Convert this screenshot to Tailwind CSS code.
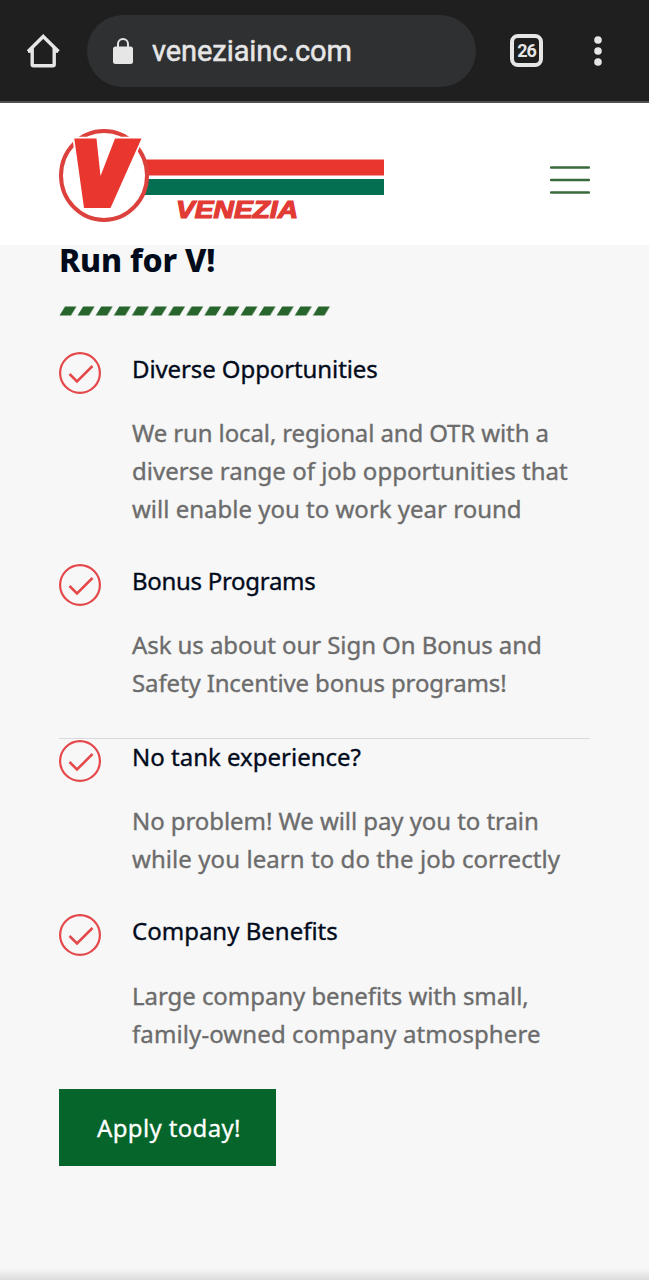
<!DOCTYPE html>
<html lang="en">
<head>
<meta charset="utf-8">
<meta name="viewport" content="width=device-width">
<title>Venezia</title>
<script src="https://cdn.jsdelivr.net/npm/@tailwindcss/browser@4"></script>
</head>
<body class="h-[1280px] w-[649px] overflow-hidden bg-[#f7f7f7] font-['Noto_Sans',sans-serif]">
<svg class="hidden"><symbol id="check" viewBox="0 0 42 42"><circle cx="21" cy="21" r="19.900" fill="none" stroke="#e5484a" stroke-width="2.200"/><path d="M10.500 22l7.500 7.500L33.500 14" fill="none" stroke="#e5484a" stroke-width="2.500"/></symbol></svg>
<div class="flex h-[1280px] flex-col">
  <div class="flex h-[103px] shrink-0 items-center border-b-2 border-[#505050] bg-[#1f1f1f] pl-[26px]">
    <svg class="h-[34px] w-[34px] shrink-0" viewBox="0 0 34 34" fill="none" stroke="#e6e6e6" stroke-width="3.400" stroke-linejoin="round"><path d="M2 17.500L17.200 2.500L32.500 17.500" stroke-linejoin="miter"/><path d="M6.200 14V30.500Q6.200 31.700 7.400 31.700H27Q28.200 31.700 28.200 30.500V14M2 17H6M28 17H32" /></svg>
    <div class="ml-[27px] flex h-[72px] w-[389px] items-center rounded-full bg-[#2f3032] pl-[26px]">
      <svg class="h-[26px] w-5" viewBox="0 0 20 26"><rect y="8.500" width="20" height="17.500" rx="2.500" fill="#e6e6e6"/><path d="M5 10V6a5 5 0 0 1 10 0V10" fill="none" stroke="#e6e6e6" stroke-width="2"/></svg>
      <span class="ml-[19px] whitespace-nowrap font-[Roboto] text-[29px] leading-9 tracking-[-0.07px] text-[#e6e6e6] [-webkit-text-stroke:0.5px_#e6e6e6]">veneziainc.com</span>
    </div>
    <div class="ml-[34px] flex size-[33px] items-center justify-center rounded-[8px] border-[4px] border-[#e6e6e6] font-[Roboto] text-[18px] font-bold leading-none tracking-[-1px] text-[#e6e6e6]">26</div>
    <svg class="ml-[51px] h-[30px] w-2" viewBox="0 0 8 30" fill="#e6e6e6"><circle cx="4" cy="4" r="3.800"/><circle cx="4" cy="15" r="3.800"/><circle cx="4" cy="26" r="3.800"/></svg>
  </div>
  <header class="flex h-[142px] shrink-0 items-start justify-between bg-white pr-[59px] pl-[58px]">
    <svg class="mt-[25px] h-[96px] w-[328px]" viewBox="58 128 328 96">
      <rect x="145" y="159.500" width="239" height="16" fill="#e93730"/><rect x="145" y="179" width="239" height="16" fill="#046f51"/>
      <ellipse cx="104" cy="175.500" rx="43" ry="44.500" fill="#fff" stroke="#dc413d" stroke-width="4"/>
      <path d="M74.300 138.500H96.500L100.500 176L115 138.500H141.500L110.500 208H84Z" fill="#e93730" stroke="#fff" stroke-width="3.500" paint-order="stroke"/>
      <text x="176" y="217.500" textLength="122" lengthAdjust="spacingAndGlyphs" font-family="Liberation Sans" font-size="23" font-weight="700" font-style="italic" fill="#e23b35" stroke="#e23b35" stroke-width="1.200">VENEZIA</text>
    </svg>
    <svg class="mt-[62px] h-[29px] w-10" viewBox="0 0 40 29" stroke="#386a3b" stroke-width="2.400" stroke-linecap="round"><path d="M1 2.500H39M1 15H39M1 27.500H39"/></svg>
  </header>
  <main class="flex flex-col px-[59px]">
    <h1 class="h-[61px] whitespace-nowrap text-[32px] font-extrabold leading-[29px] tracking-[-0.2px] text-[#020b1c]">Run for V!</h1>
    <svg class="h-[10px] w-[272px]" viewBox="0 0 272 10"><defs><pattern id="st" width="18.100" height="10" patternUnits="userSpaceOnUse"><path d="M0.500 9.500L6 0.500H17.500L12 9.500Z" fill="#27652d"/></pattern></defs><rect width="271.500" height="10" fill="url(#st)"/></svg>
    <section class="mt-[34px] flex h-[212px] gap-[31px]">
      <svg class="mt-[1.500px] size-[42px] shrink-0"><use href="#check"/></svg>
      <div class="whitespace-nowrap text-[24px] leading-[38px] text-[#6c6c6c] [-webkit-text-stroke:0.35px]">
        <h2 class="tracking-[-0.1px] text-[#020b1c]">Diverse Opportunities</h2>
        <p class="mt-[26px]"><span class="tracking-[-0.12px]">We run local, regional and OTR with a</span><br><span>diverse range of job opportunities that</span><br><span>will enable you to work year round</span></p>
      </div>
    </section>
    <section class="flex h-[176px] gap-[31px]">
      <svg class="mt-[1.500px] size-[42px] shrink-0"><use href="#check"/></svg>
      <div class="whitespace-nowrap text-[24px] leading-[38px] text-[#6c6c6c] [-webkit-text-stroke:0.35px]">
        <h2 class="tracking-[-0.3px] text-[#020b1c]">Bonus Programs</h2>
        <p class="mt-[26px]"><span class="tracking-[-0.07px]">Ask us about our Sign On Bonus and</span><br><span class="tracking-[-0.13px]">Safety Incentive bonus programs!</span></p>
      </div>
    </section>
    <section class="flex h-[174px] gap-[31px] border-t border-[#dadada]">
      <svg class="mt-[0.500px] size-[42px] shrink-0"><use href="#check"/></svg>
      <div class="-mt-px whitespace-nowrap text-[24px] leading-[38px] text-[#6c6c6c] [-webkit-text-stroke:0.35px]">
        <h2 class="text-[#020b1c]">No tank experience?</h2>
        <p class="mt-[26px]"><span class="tracking-[-0.07px]">No problem! We will pay you to train</span><br><span class="tracking-[0.07px]">while you learn to do the job correctly</span></p>
      </div>
    </section>
    <section class="flex h-[177px] gap-[31px]">
      <svg class="mt-[2px] size-[42px] shrink-0"><use href="#check"/></svg>
      <div class="whitespace-nowrap text-[24px] leading-[38px] text-[#6c6c6c] [-webkit-text-stroke:0.35px]">
        <h2 class="text-[#020b1c]">Company Benefits</h2>
        <p class="mt-[27px]"><span class="tracking-[-0.06px]">Large company benefits with small,</span><br><span class="tracking-[0.1px]">family-owned company atmosphere</span></p>
      </div>
    </section>
    <a class="flex h-[77px] w-[217px] items-center justify-center whitespace-nowrap bg-[#05652a] pl-[3px] text-[24px] tracking-[0.35px] text-white [-webkit-text-stroke:0.3px]">Apply today!</a>
  </main>
  <div class="mt-auto h-[12px] bg-linear-to-b from-[#f7f7f7] to-[#dcdcdc]"></div>
</div>
</body>
</html>
